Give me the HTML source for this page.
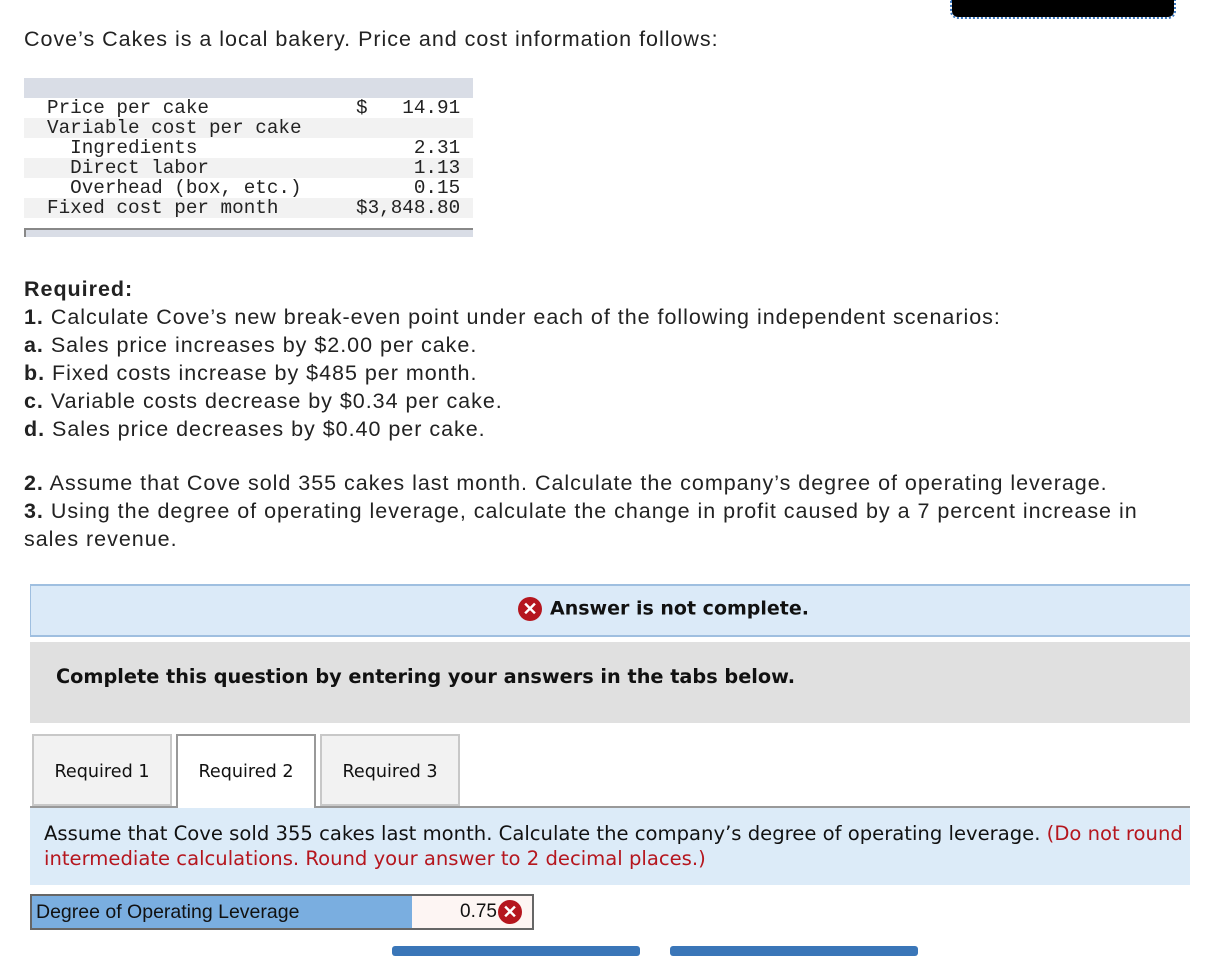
<!DOCTYPE html>
<html><head><meta charset="utf-8"><style>
body{margin:0;width:1210px;height:954px;position:relative;background:#fff;font-family:"Liberation Sans",sans-serif;color:#222;overflow:hidden}
.a{position:absolute}
.t{font-size:21.5px;letter-spacing:0.98px;line-height:28px;white-space:nowrap}
.mono{font-family:"Liberation Mono",monospace;font-size:19.3px;line-height:20px;white-space:pre}
.row{position:absolute;left:24px;width:449px;height:20px}
.v{font-family:"DejaVu Sans",sans-serif}
.x{display:inline-block;width:24px;height:24px;border-radius:50%;background:#b5161e;color:#fff;text-align:center;line-height:24px;font-size:18px;font-weight:bold;vertical-align:middle;font-family:"Liberation Sans",sans-serif;letter-spacing:0}
.tab{position:absolute;top:734px;height:72px;border:2px solid #c8c8c8;background:#f2f2f2;box-sizing:border-box;font-size:17.6px;text-align:center;line-height:72px;color:#111;font-family:"DejaVu Sans",sans-serif}
</style></head><body>
<div class="a" style="left:952px;top:0;width:222px;height:17px;background:#000;border-radius:0 0 6px 6px;outline:2px dotted #3b78c0"></div>
<div class="a t" style="left:24px;top:25px">Cove’s Cakes is a local bakery. Price and cost information follows:</div>
<div class="a" style="left:24px;top:78px;width:449px;height:20px;background:#d9dde6"></div>
<div class="row" style="top:118px;background:#f2f2f2"></div>
<div class="row" style="top:158px;background:#f2f2f2"></div>
<div class="row" style="top:198px;background:#f2f2f2"></div>
<div class="a mono" style="left:47px;top:98px">Price per cake
Variable cost per cake
  Ingredients
  Direct labor
  Overhead (box, etc.)
Fixed cost per month</div>
<div class="a mono" style="left:356px;top:98px">$   14.91
         
     2.31
     1.13
     0.15
$3,848.80</div>
<div class="a" style="left:24px;top:228px;width:449px;height:9px;background:#d9dde6;border-top:2px solid #888;box-sizing:border-box"></div>
<div class="a" style="left:24px;top:228px;width:2px;height:9px;background:#888"></div>
<div class="a t" style="left:24px;top:275px"><b>Required:</b><br><b>1.</b> Calculate Cove’s new break-even point under each of the following independent scenarios:<br><b>a.</b> Sales price increases by $2.00 per cake.<br><b>b.</b> Fixed costs increase by $485 per month.<br><b>c.</b> Variable costs decrease by $0.34 per cake.<br><b>d.</b> Sales price decreases by $0.40 per cake.</div>
<div class="a t" style="left:24px;top:469px"><b>2.</b> Assume that Cove sold 355 cakes last month. Calculate the company’s degree of operating leverage.<br><b>3.</b> Using the degree of operating leverage, calculate the change in profit caused by a 7 percent increase in<br>sales revenue.</div>
<div class="a" style="left:30px;top:584px;width:1160px;height:53px;background:#dbeaf8;border-top:2px solid #9fbfe0;border-bottom:2px solid #9fbfe0;box-sizing:border-box;border-left:1px solid #9fbfe0"></div>
<div class="a v" style="left:518px;top:597px;font-size:19px;font-weight:bold;color:#111;white-space:nowrap"><span class="x" style="margin-right:8px">✕</span>Answer is not complete.</div>
<div class="a" style="left:30px;top:642px;width:1160px;height:81px;background:#e0e0e0"></div>
<div class="a v" style="left:56px;top:665px;font-size:19.3px;font-weight:bold;color:#111;white-space:nowrap">Complete this question by entering your answers in the tabs below.</div>
<div class="tab" style="left:32px;width:140px">Required 1</div>
<div class="tab" style="left:176px;width:140px;background:#fff;border-color:#999;height:74px;border-bottom:none">Required 2</div>
<div class="tab" style="left:320px;width:140px">Required 3</div>
<div class="a" style="left:30px;top:806px;width:146px;height:2px;background:#999"></div>
<div class="a" style="left:316px;top:806px;width:874px;height:2px;background:#999"></div>
<div class="a" style="left:30px;top:808px;width:1160px;height:77px;background:#dcebf8"></div>
<div class="a v" style="left:44px;top:821px;font-size:19.6px;line-height:25px;color:#111;white-space:nowrap">Assume that Cove sold 355 cakes last month. Calculate the company’s degree of operating leverage. <span style="color:#b5161e">(Do not round<br>intermediate calculations. Round your answer to 2 decimal places.)</span></div>
<div class="a" style="left:30px;top:894px;width:384px;height:36px;background:#7aaee0;border:2px solid #666;box-sizing:border-box;font-size:19.5px;line-height:32px;padding-left:4px;color:#111">Degree of Operating Leverage</div>
<div class="a" style="left:412px;top:894px;width:122px;height:36px;background:#fdf5f3;border:2px solid #666;border-left:none;box-sizing:border-box;font-size:19px;line-height:32px;text-align:right;padding-right:10px;color:#111">0.75<span class="x" style="margin-left:1px">✕</span></div>
<div class="a" style="left:392px;top:946px;width:248px;height:10px;background:#3a76b8;border-radius:3px"></div>
<div class="a" style="left:670px;top:946px;width:248px;height:10px;background:#3a76b8;border-radius:3px"></div>
</body></html>
